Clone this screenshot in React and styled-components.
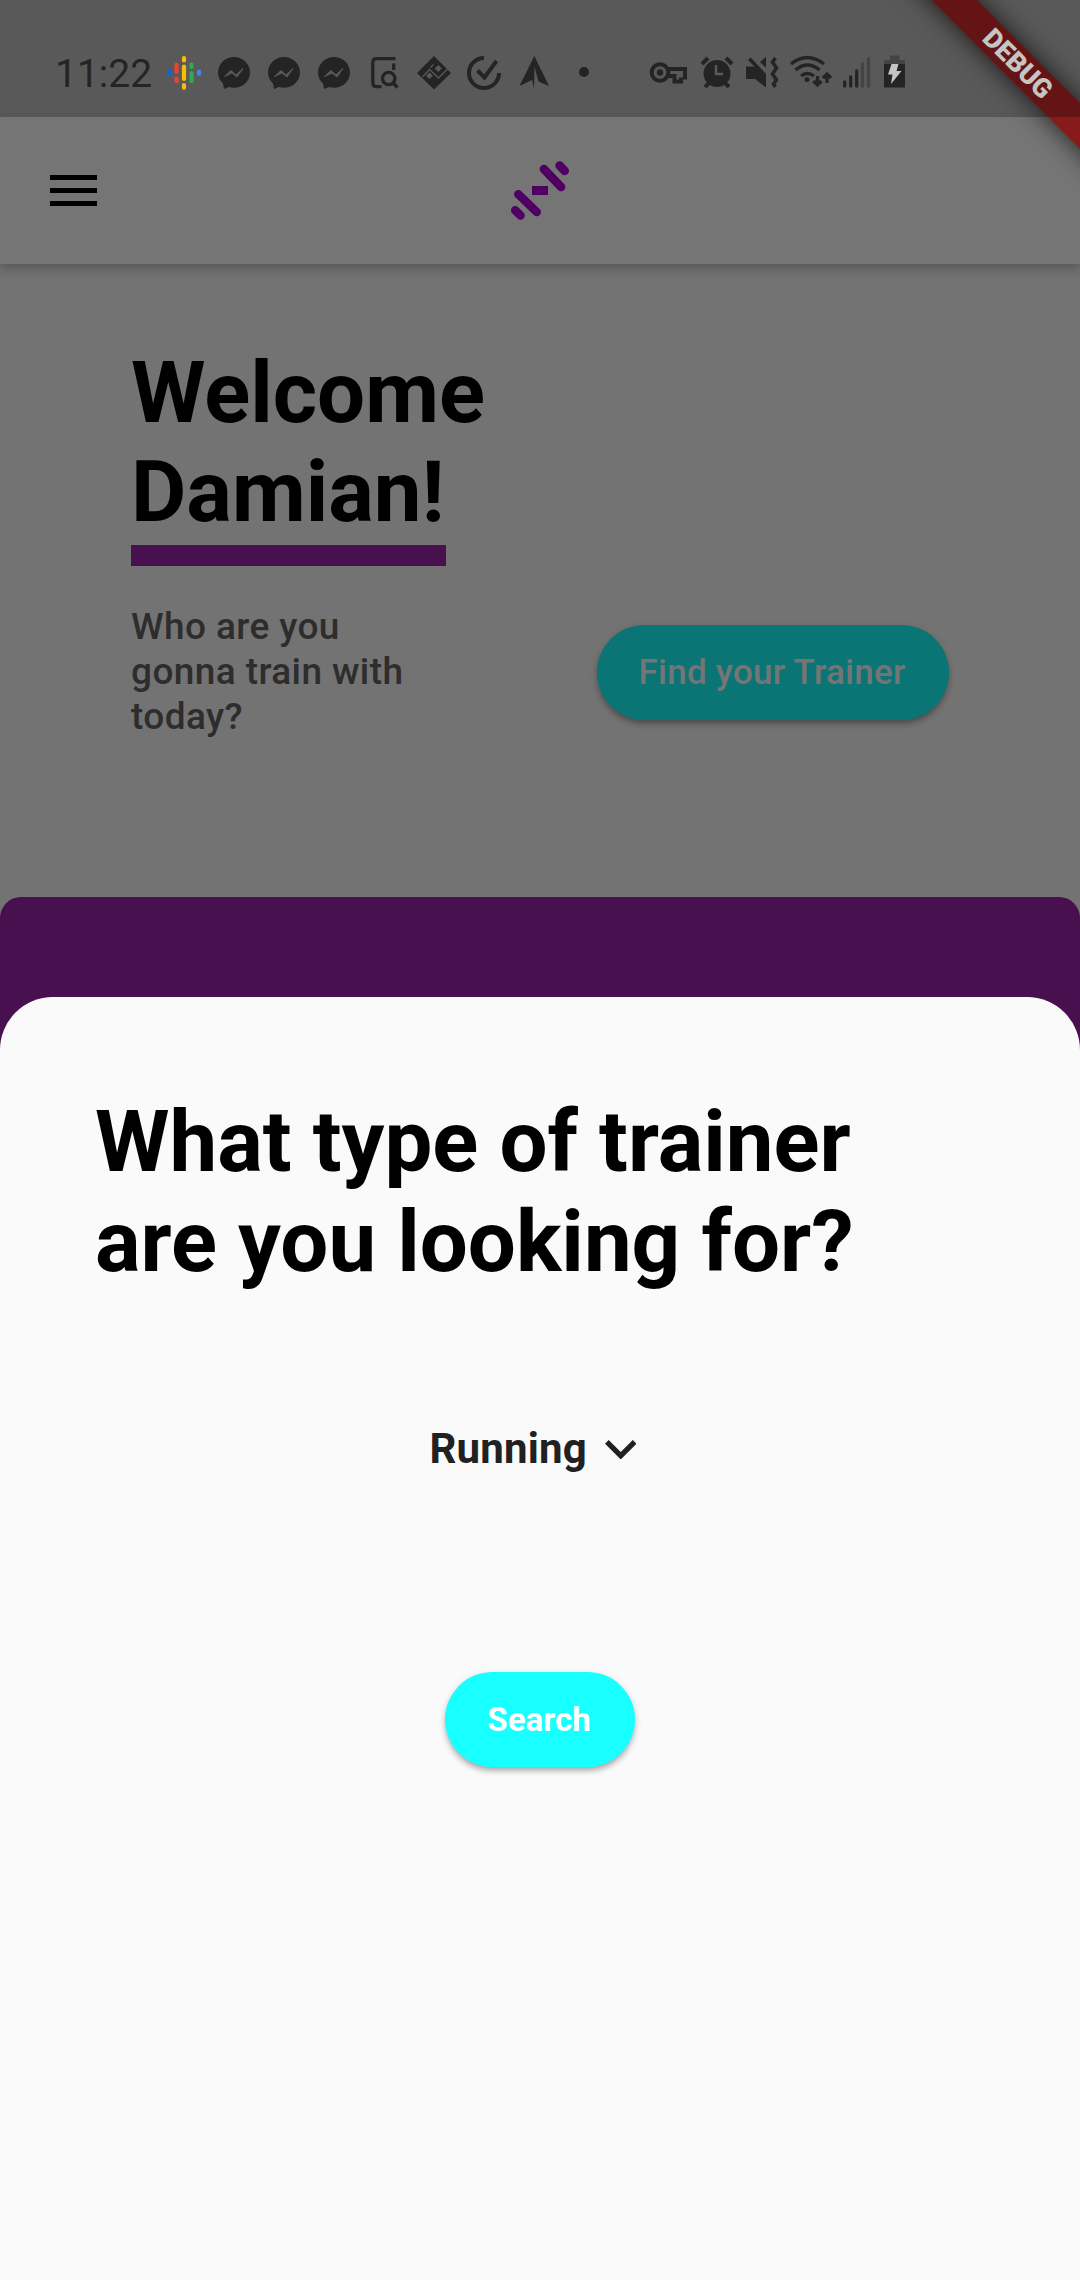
import React from 'react';
import styled, { createGlobalStyle } from 'styled-components';

const Global = createGlobalStyle`
  *{box-sizing:border-box}
  body{margin:0;background:#737373;font-family:Roboto,sans-serif;overflow:hidden}
  h1,h2,p{margin:0}
`;
const Screen = styled.div`
  position:relative;width:1080px;height:2280px;overflow:hidden;background:#737373;
  display:flex;flex-direction:column;
`;
const StatusBar = styled.header`
  height:117px;flex:none;background:#595959;color:#242424;
  display:flex;align-items:center;padding:33px 0 0 55px;
`;
const Clock = styled.span`font-size:39px;line-height:46px;width:111px;margin-bottom:3px;white-space:nowrap;`;
const Glyphs = styled.svg`display:block;flex:none;width:740px;height:70px;`;
const AppBar = styled.nav`
  height:147px;flex:none;background:#757575;display:grid;grid-template-columns:1fr 80px 1fr;
  align-items:center;padding:0 50px;box-shadow:0 5px 11px rgba(0,0,0,.24);
`;
const MenuButton = styled.button`
  border:0;background:none;padding:0;width:47px;height:31px;
  display:flex;flex-direction:column;justify-content:space-between;
`;
const MenuLine = styled.span`width:47px;height:5px;background:#000;`;
const Logo = styled.svg`display:block;width:80px;height:80px;align-self:start;margin-top:33px;`;
const Hero = styled.section`padding:80px 131px 0;height:632.600px;flex:none;`;
const Title = styled.h1`
  font-weight:700;font-size:85.150px;line-height:${p => p.$line || 99}px;color:#000;
`;
const Underline = styled.div`width:315px;height:21px;background:#48104f;margin-top:3px;`;
const HeroRow = styled.div`display:flex;justify-content:space-between;align-items:flex-start;margin-top:38px;`;
const Question = styled.p`
  width:290px;font-size:37px;line-height:45px;font-weight:500;letter-spacing:.4px;color:#2d2d2d;
`;
const Action = styled.div`margin-top:${p => p.$top}px;`;
const Pill = styled.button`
  border:0;padding:0 2px 0 0;height:95px;border-radius:48px;width:${p => p.$width}px;
  background:${p => p.$bg};color:${p => p.$fg};font:${p => p.$font} Roboto,sans-serif;
  letter-spacing:${p => p.$track || 0}px;
  display:flex;align-items:center;justify-content:center;white-space:nowrap;
  box-shadow:0 5px 6px -3px rgba(0,0,0,.22),0 4px 6px rgba(0,0,0,.14),0 2px 9px rgba(0,0,0,.09);
`;
const PurplePanel = styled.section`flex:1;background:#48104f;border-radius:21px 21px 0 0;`;
const Sheet = styled.section`
  position:absolute;left:0;right:0;bottom:0;height:1283.300px;background:#fafafa;
  border-radius:53px 53px 0 0;padding:95.300px 95px 0;
  display:flex;flex-direction:column;align-items:center;
`;
const SheetTitle = styled(Title)`align-self:stretch;white-space:nowrap;`;
const Select = styled.button`
  border:0;background:none;padding:0 14px 0 0;margin-top:126px;height:60px;color:#212121;
  display:flex;align-items:center;gap:18px;font:700 42px/49px Roboto,sans-serif;letter-spacing:.18px;
`;
const Chevron = styled.svg`display:block;width:31.500px;height:19.500px;margin-top:3px;`;
const Ribbon = styled.div`
  position:absolute;top:0;right:0;width:200px;height:200px;overflow:hidden;pointer-events:none;
`;
const Band = styled.div`
  position:absolute;left:-14px;top:46px;width:300px;height:32px;padding-left:5px;
  background:linear-gradient(135deg,#641414 73.400%,#871a1a 73.400%);
  transform:rotate(45deg);box-shadow:0 0 26px rgba(0,0,0,.75);
  display:flex;align-items:center;justify-content:center;
  color:#c5c5c5;font-size:26.800px;line-height:32px;font-weight:900;
`;

const Messenger = ({ x }) => (
  <g transform={`translate(${x} 0)`}>
    <path fill="#242424" d="M16 1C7 1 0 8 0 16.700c0 4.300 2 8 5 10.800L6 33l5-2c1.600.4 3.300.7 5 .7 9 0 16-6.800 16-15.300S25 1 16 1Z" />
    <path d="M6.500 20.500 13 14.500l5 4.500 7-6.500-6 8.500-5-4z" fill="#595959" stroke="#595959" strokeWidth="1" />
  </g>
);

const StatusGlyphs = () => (
  <Glyphs viewBox="166 40 740 70">
    <g strokeWidth="4.200" strokeLinecap="round">
      <path stroke="#0b66d8" d="M169.300 71.500v2.500" />
      <path stroke="#ea4335" d="M176.500 64.700v7.200M176.500 78.700v2.500" />
      <path stroke="#fbbc04" d="M184 58v2.500M184 66.500v12.500M184 85.200v2.500" />
      <path stroke="#34a853" d="M191.500 64.700v2.500M191.500 73.200v8" />
      <path stroke="#4285f4" d="M199 71.500v2.500" />
    </g>
    <g transform="translate(0 56)">
      <Messenger x={218} /><Messenger x={268} /><Messenger x={318} />
    </g>
    <g fill="none" stroke="#242424" strokeWidth="3.300">
      <path d="M395.500 58.700h-19q-3.700 0-3.700 3.700v20q0 4.200 3.700 4.200h5M393.700 63.500v6.500" />
      <circle cx="388.700" cy="78.500" r="6.200" /><path d="m392.500 82.500 5 5" />
    </g>
    <path fill="#242424" d="m434 56 17 17-17 16.500L417 73z" />
    <g fill="none" stroke="#595959" strokeWidth="1.300">
      <path d="m422.500 77 7-7.500 9 8.500 10.500-10.500M430.500 67.500l3-3" />
      <path fill="#595959" stroke="none" d="m438.300 65 3.500 3.500-3.500 3.500-3.500-3.500zM429.500 72.500l3.300 3.300-3.300 3.300-3.300-3.300z" />
    </g>
    <path d="M484 58a15 15 0 1 0 15 15" fill="none" stroke="#242424" strokeWidth="4" />
    <path d="m477.500 70.500 7 7 12-16.500" fill="none" stroke="#242424" strokeWidth="4" />
    <path fill="#242424" d="m534.300 56 14.700 30-10.500-4.500-4-15-.5 22-2-8.500-12.500 6z" />
    <circle cx="584" cy="72" r="5" fill="#242424" />
    <g fill="none" stroke="#242424" strokeWidth="4">
      <circle cx="660" cy="72.500" r="8.300" />
      <path d="M667 69h18v10.500M667 76h7.500v5.500h6.500v-4" />
    </g>
    <circle cx="660" cy="72.500" r="3.200" fill="#242424" />
    <circle cx="717" cy="73.500" r="13.500" fill="#242424" />
    <path d="m702 64 6-6m18 0 6 6M709 83l-4 4m20-4 4 4" fill="none" stroke="#242424" strokeWidth="4" />
    <path d="M716 65v9h7" fill="none" stroke="#595959" strokeWidth="2.500" />
    <path fill="#242424" d="M746 66.500h8.500l-6.500-6.500 2.700-2.500L766 74v13.500L755 79h-9zM760 62l6-5.300v11z" />
    <path d="m775.500 58-3 4 4 6-4 6 4 6-3 4 2 3" fill="none" stroke="#242424" strokeWidth="3.500" />
    <g fill="none" stroke="#242424" strokeWidth="3.300">
      <path d="M791 64q16-13 33 0M795.500 70q12-10 24 0M801 76q6.500-5 13 0" />
      <path d="M817.500 76v8.500m-4-3.500 4 4 4-4M827 83v-8.500m-4 3.500 4-4 4 4" />
    </g>
    <circle cx="807" cy="79.500" r="2.500" fill="#242424" />
    <g strokeWidth="3.300" strokeLinecap="round" stroke="#242424">
      <path d="M844.700 82v4M850.700 77v9M856.700 71v15" />
      <path stroke="#444" d="M862.500 64v22M868.500 59v27" />
    </g>
    <path fill="#444" d="M890 55.500h9.500V60h5.500v5h-21v-5h6z" />
    <path fill="#242424" d="M884 64h21v23.500h-21z" />
    <path fill="#c5c5c5" d="M891.500 64h7l-2 7h5L891 84l1.500-9.500H888z" />
  </Glyphs>
);

export default function App() {
  return (
    <Screen>
      <Global />
      <StatusBar><Clock>11:22</Clock><StatusGlyphs /></StatusBar>
      <AppBar>
        <MenuButton aria-label="Menu"><MenuLine /><MenuLine /><MenuLine /></MenuButton>
        <Logo viewBox="500 150 80 80">
          <g stroke="#4f0062" strokeWidth="8.500" strokeLinecap="round">
            <path d="m543.900 169 17.200 18M518.300 194.200l18.400 17.800M559.600 165.500l5.200 5.500M515.200 210.200l5.300 5.300" />
          </g>
          <path fill="#4f0062" d="M532 186h16v9h-16z" />
        </Logo>
      </AppBar>
      <Hero>
        <Title>Welcome<br />Damian!</Title>
        <Underline />
        <HeroRow>
          <Question>Who are you gonna train with today?</Question>
          <Action $top={21}>
            <Pill $width={352} $bg="#0b7575" $fg="#757575" $font="500 35px" $track={0.25}>Find your Trainer</Pill>
          </Action>
        </HeroRow>
      </Hero>
      <PurplePanel />
      <Sheet>
        <SheetTitle as="h2" $line={100}>What type of trainer<br />are you looking for?</SheetTitle>
        <Select>
          Running
          <Chevron viewBox="6 8.59 12 7.41">
            <path fill="#212121" d="M7.410 8.590 12 13.170l4.590-4.580L18 10l-6 6-6-6z" />
          </Chevron>
        </Select>
        <Action $top={194}>
          <Pill $width={190} $bg="#18ffff" $fg="#fff" $font="700 33px">Search</Pill>
        </Action>
      </Sheet>
      <Ribbon><Band>DEBUG</Band></Ribbon>
    </Screen>
  );
}
